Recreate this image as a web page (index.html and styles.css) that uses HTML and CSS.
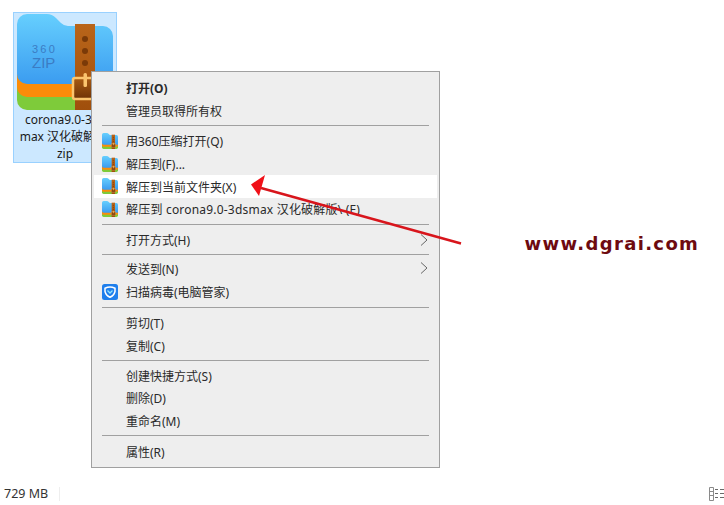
FILE: index.html
```html
<!DOCTYPE html>
<html lang="zh-CN">
<head>
    <meta charset="UTF-8">
    <title>解压到当前文件夹</title>
    <link rel="stylesheet" href="styles.css">
</head>
<body>
    <svg class="defs" width="0" height="0">
        <defs>
            <linearGradient id="folder-blue" x1="0" y1="0" x2="0" y2="1">
                <stop offset="0" stop-color="#66cffe"/>
                <stop offset="1" stop-color="#3b9cf0"/>
            </linearGradient>
            <linearGradient id="strap" x1="0" y1="0" x2="0" y2="1">
                <stop offset="0" stop-color="#b9651a"/>
                <stop offset="1" stop-color="#a04f0c"/>
            </linearGradient>
            <linearGradient id="buckle" x1="0" y1="0" x2="0" y2="1">
                <stop offset="0" stop-color="#a85a12"/>
                <stop offset="1" stop-color="#6f3306"/>
            </linearGradient>
            <symbol id="zip-icon" viewBox="0 0 96 96">
                <rect y="50" width="96" height="46" rx="10" fill="#7ecb3a"/>
                <rect y="40" width="96" height="43" rx="10" fill="#fb8c0a"/>
                <path d="M0 60V10A10 10 0 0 1 10 0H30q5 0 9 4l5 5q3 3 7 3H86a10 10 0 0 1 10 10V70H10A10 10 0 0 1 0 60z" fill="url(#folder-blue)"/>
                <rect x="58" y="10" width="20" height="86" fill="url(#strap)"/>
                <circle cx="68" cy="25" r="3" fill="#7a3a08"/>
                <circle cx="68" cy="37" r="3" fill="#7a3a08"/>
                <circle cx="68" cy="49" r="3" fill="#7a3a08"/>
                <rect x="56" y="64" width="26" height="21" rx="2" fill="url(#buckle)" stroke="#fbc56e" stroke-width="2.500"/>
                <rect x="66.500" y="59" width="3.500" height="14" rx="1.500" fill="#fbc56e"/>
            </symbol>
        </defs>
    </svg>

    <div class="file-tile">
        <div class="file-icon">
            <svg width="96" height="96"><use href="#zip-icon"/></svg>
            <div class="brand">
                <span class="brand-num">360</span>
                <span class="brand-zip">ZIP</span>
            </div>
        </div>
        <div class="file-name">corona9.0-3ds<br>max 汉化破解版.<br>zip</div>
    </div>

    <div class="context-menu">
        <div class="item bold">打开(O)</div>
        <div class="item">管理员取得所有权</div>
        <div class="sep"></div>
        <div class="item"><svg class="item-icon"><use href="#zip-icon"/></svg>用360压缩打开(Q)</div>
        <div class="item"><svg class="item-icon"><use href="#zip-icon"/></svg>解压到(F)...</div>
        <div class="item active"><svg class="item-icon"><use href="#zip-icon"/></svg>解压到当前文件夹(X)</div>
        <div class="item item-long"><svg class="item-icon"><use href="#zip-icon"/></svg>解压到 corona9.0-3dsmax 汉化破解版\ (E)</div>
        <div class="sep"></div>
        <div class="item">打开方式(H)<svg class="chevron" viewBox="0 0 8 12"><path d="M1 0.500 7 6 1 11.500"/></svg></div>
        <div class="sep sep-tight"></div>
        <div class="item">发送到(N)<svg class="chevron" viewBox="0 0 8 12"><path d="M1 0.500 7 6 1 11.500"/></svg></div>
        <div class="item item-scan"><svg class="item-icon" viewBox="0 0 16 16"><rect width="16" height="16" rx="2.500" fill="#1f7fec"/><path d="M3 4.200q5-2.400 10 0v3.300q-1 4-5 5.800q-4-1.800-5-5.800z" fill="none" stroke="#fff" stroke-width="1.500"/><path d="M5.500 6.500 8 9l2.500-2.500" fill="none" stroke="#8fe4ff" stroke-width="1.300"/></svg>扫描病毒(电脑管家)</div>
        <div class="sep"></div>
        <div class="item">剪切(T)</div>
        <div class="item">复制(C)</div>
        <div class="sep sep-mid"></div>
        <div class="item">创建快捷方式(S)</div>
        <div class="item">删除(D)</div>
        <div class="item">重命名(M)</div>
        <div class="sep"></div>
        <div class="item">属性(R)</div>
    </div>

    <svg class="arrow" width="724" height="505" viewBox="0 0 724 505">
        <path d="M461 243.500 261 188" stroke="#d8151c" stroke-width="2.500" fill="none"/>
        <path d="M251 184.500 265 175 259 196z" fill="#f01018"/>
    </svg>

    <div class="watermark">www.dgrai.com</div>

    <div class="status-bar">
        <span class="status-size">729 MB</span>
        <span class="status-divider"></span>
        <svg class="view-icon" width="16" height="14" viewBox="0 0 16 14">
            <path d="M.5.500h4v13h-4zM.5 4.500h4M.5 8.500h4" fill="none" stroke="#8a8a8a"/>
            <path d="M6 2.500h3M11 2.500h4M6 6.500h3M11 6.500h4M6 10.500h3M11 10.500h4" stroke="#6a6a6a"/>
        </svg>
    </div>
</body>
</html>
```

FILE: styles.css
```css
html, body { margin: 0; height: 100%; }
body { position: relative; width: 724px; height: 505px; overflow: hidden; background: #fff; font-family: "Noto Sans", "Noto Sans CJK SC", sans-serif; font-size: 12px; color: #2a2a2a; }
.defs { position: absolute; }

.file-tile { position: absolute; left: 13px; top: 12px; width: 104px; height: 151px; box-sizing: border-box; background: #cce8ff; border: 1px solid #99d1ff; display: flex; flex-direction: column; align-items: center; padding-top: 1px; }
.file-icon { position: relative; width: 96px; height: 96px; }
.brand { position: absolute; left: 15px; top: 30px; display: flex; flex-direction: column; color: #3b7cc4; font-family: "Liberation Sans", sans-serif; }
.brand-num { font-size: 11px; line-height: 11px; letter-spacing: 2.200px; }
.brand-zip { font-size: 15px; line-height: 15px; }
.file-name { margin-top: 1px; text-align: center; line-height: 17px; white-space: nowrap; color: #1a1a1a; }

.context-menu { position: absolute; left: 91px; top: 71px; width: 349px; height: 397px; box-sizing: border-box; background: #eee; border: 1px solid #a0a0a0; padding: 4.600px 2px; }
.item { display: flex; align-items: center; position: relative; height: 22.700px; padding-left: 32px; white-space: pre; }
.item.bold { font-weight: 700; }
.item.active { background: #fff; }
.item-long { letter-spacing: .2px; }
.item-scan { margin-top: 1px; }
.item-icon { position: absolute; left: 8px; top: 3px; width: 16px; height: 16px; }
.chevron { position: absolute; right: 9px; top: 5px; width: 8px; height: 12px; fill: none; stroke: #666; }
.sep { height: 1px; background: #a0a0a0; margin: 3px 8px 4px; }
.sep-tight { margin-bottom: 2px; }
.sep-mid { margin-bottom: 3px; }

.arrow { position: absolute; left: 0; top: 0; pointer-events: none; }
.watermark { position: absolute; left: 524.500px; top: 231px; font-family: "DejaVu Sans", sans-serif; font-weight: 700; font-size: 18px; letter-spacing: 1.350px; color: #6d0a10; line-height: 26px; }

.status-bar { position: absolute; left: 0; right: 0; top: 482px; height: 23px; display: flex; align-items: center; padding: 0 0 0 4px; color: #333; font-size: 12.500px; }
.status-divider { width: 1px; height: 14px; background: #eee; margin-left: 11px; }
.view-icon { margin-left: auto; margin-right: -1px; }
```
